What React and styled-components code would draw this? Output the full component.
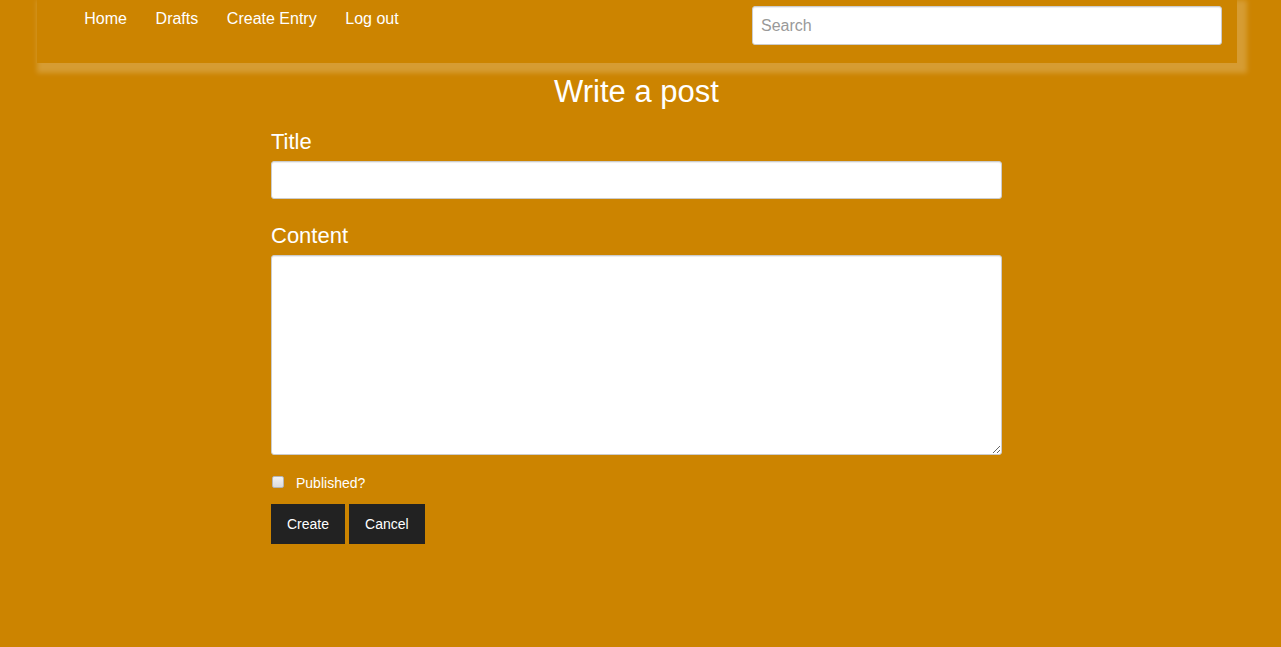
import React from "react";
import styled, { createGlobalStyle } from "styled-components";

const Global = createGlobalStyle`
  html, body { margin: 0; padding: 0; background: #cc8400; }
  body { font-family: "Liberation Sans", Arial, sans-serif; color: #fff; min-height: 647px; }
  * { box-sizing: border-box; }
`;

const NavBar = styled.nav`
  margin-left: 37px;
  width: 1200px;
  height: 63px;
  background: #cc8400;
  box-shadow: 5px 5px 5px 5px rgba(255, 255, 255, 0.2);
  display: flex;
  justify-content: space-between;
  align-items: flex-start;
  padding: 0 15px 0 33px;
`;

const NavList = styled.ul`
  list-style: none;
  margin: 0;
  padding: 0;
  display: flex;
`;

const NavLink = styled.a`
  display: block;
  padding: 9px 14.3px;
  font-size: 16px;
  line-height: 20px;
  color: #fff;
  text-decoration: none;
  cursor: pointer;
`;

const SearchInput = styled.input`
  margin-top: 6px;
  width: 470px;
  height: 39px;
  border: 1px solid #ccc;
  border-radius: 3px;
  padding: 0 8px;
  font-family: "Liberation Sans", Arial, sans-serif;
  font-size: 16px;
  color: #555;
  background: #fff;
  box-shadow: inset 0 1px 1px rgba(0, 0, 0, 0.075);
  outline: none;
  &::placeholder { color: #999; }
`;

const Form = styled.form`
  width: 731px;
  margin-left: 271px;
  display: flex;
  flex-direction: column;
`;

const Heading = styled.h1`
  margin: 12px 0 0;
  font-size: 31px;
  line-height: 33px;
  font-weight: 400;
  text-align: center;
`;

const Label = styled.label`
  display: block;
  font-size: 22px;
  line-height: 23px;
  margin-top: ${(p) => p.$top}px;
  margin-bottom: ${(p) => p.$bottom}px;
`;

const TextInput = styled.input`
  width: 100%;
  height: 38px;
  border: 1px solid #ccc;
  border-radius: 3px;
  background: #fff;
  box-shadow: inset 0 1px 1px rgba(0, 0, 0, 0.075);
  font-size: 16px;
  padding: 0 8px;
  outline: none;
`;

const TextArea = styled.textarea`
  display: block;
  width: 100%;
  height: 200px;
  border: 1px solid #ccc;
  border-radius: 3px;
  background: #fff;
  box-shadow: inset 0 1px 1px rgba(0, 0, 0, 0.075);
  font-size: 16px;
  padding: 6px 8px;
  outline: none;
`;

const CheckRow = styled.div`
  display: flex;
  align-items: center;
  margin-top: 18px;
  height: 17px;
`;

const Check = styled.input`
  appearance: none;
  -webkit-appearance: none;
  margin: 0 12px 0 1px;
  width: 12px;
  height: 12px;
  border: 1px solid #b5b5b5;
  border-radius: 2px;
  background: linear-gradient(#f2f2f2, #dcdcdc);
  flex: none;
  &:checked {
    background: linear-gradient(#f2f2f2, #dcdcdc);
    box-shadow: inset 0 0 0 2px #eee, inset 0 0 0 6px #333;
  }
`;

const CheckLabel = styled.label`
  font-size: 14px;
  line-height: 17px;
  margin-top: 4px;
`;

const Buttons = styled.div`
  display: flex;
  gap: 4px;
  margin-top: 14px;
`;

const Button = styled.button`
  height: 40px;
  padding: 0 16px;
  background: #222;
  color: #fff;
  border: none;
  border-radius: 0;
  font-family: "Liberation Sans", Arial, sans-serif;
  font-size: 14px;
  cursor: pointer;
`;

export default function App() {
  return (
    <>
      <Global />
      <NavBar>
        <NavList>
          <li><NavLink>Home</NavLink></li>
          <li><NavLink>Drafts</NavLink></li>
          <li><NavLink>Create Entry</NavLink></li>
          <li><NavLink>Log out</NavLink></li>
        </NavList>
        <SearchInput placeholder="Search" />
      </NavBar>
      <Form onSubmit={(e) => e.preventDefault()}>
        <Heading>Write a post</Heading>
        <Label $top={22} $bottom={8}>Title</Label>
        <TextInput />
        <Label $top={25} $bottom={8}>Content</Label>
        <TextArea />
        <CheckRow>
          <Check type="checkbox" id="pub" />
          <CheckLabel htmlFor="pub">Published?</CheckLabel>
        </CheckRow>
        <Buttons>
          <Button type="button">Create</Button>
          <Button type="button">Cancel</Button>
        </Buttons>
      </Form>
    </>
  );
}
